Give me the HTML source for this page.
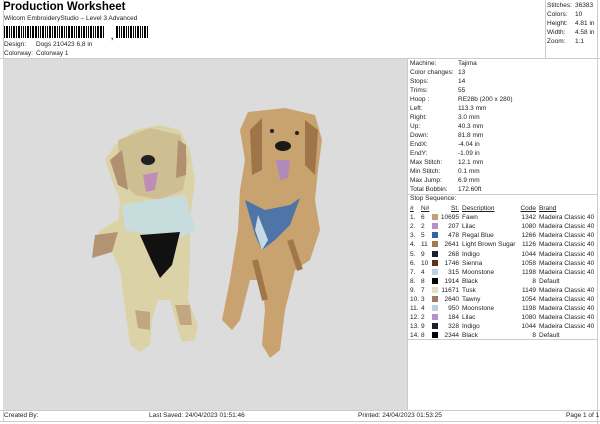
<!DOCTYPE html>
<html><head><meta charset="utf-8"><style>
*{margin:0;padding:0;box-sizing:border-box}
body{width:600px;height:424px;background:#fff;font-family:"Liberation Sans",sans-serif;font-size:6.5px;color:#222;position:relative;overflow:hidden}
.a{position:absolute;white-space:nowrap}
table{border-collapse:collapse}
td{padding:0;height:9px;line-height:9px;white-space:nowrap}
.seq{table-layout:fixed;width:188px}
.seq td{height:9.1px;line-height:9px;overflow:hidden}
.r{text-align:right}
.d{padding-left:3px}
.sw{display:inline-block;width:6px;height:6px;float:left;margin-top:1px}
u{text-decoration:underline}
</style></head><body>
<div class="a" style="left:3px;top:1px;font-size:11.5px;font-weight:bold;color:#000">Production Worksheet</div>
<div class="a" style="left:4px;top:15px">Wilcom EmbroideryStudio – Level 3 Advanced</div>
<div class="a" style="left:4px;top:26px;height:12px;width:142px;" id="bc"></div>
<div class="a" style="left:4px;top:41px">Design:</div><div class="a" style="left:36px;top:41px">Dogs 210423 6,8 in</div>
<div class="a" style="left:4px;top:50px">Colorway:</div><div class="a" style="left:36px;top:50px">Colorway 1</div>
<div class="a" style="left:0;top:58px;width:600px;border-top:1px solid #ccc"></div>
<div class="a" style="left:3px;top:0;height:58px;border-left:1px solid #ccc"></div>
<div class="a" style="left:597px;top:0;height:424px;border-left:1px solid #ccc"></div>
<div class="a" style="left:545px;top:0;width:53px;height:58px;border-left:1px solid #ccc"></div>
<table class="a" style="left:547px;top:1px"><tr><td style="width:28px">Stitches:</td><td>36383</td></tr><tr><td>Colors:</td><td>10</td></tr><tr><td>Height:</td><td>4.81 in</td></tr><tr><td>Width:</td><td>4.58 in</td></tr><tr><td>Zoom:</td><td>1:1</td></tr></table>
<div class="a" style="left:3px;top:59px;width:404px;height:351px;background:#dcdcdc"></div>
<svg class="a" style="left:3px;top:59px" width="404" height="351" viewBox="3 59 404 351">
<g>
<path d="M118 220 L100 230 L92 250 L110 248 L120 270 L128 330 L130 345 L140 352 L150 345 L152 320 L158 300 L170 300 L178 330 L182 342 L195 340 L198 325 L188 300 L190 260 L190 220 L195 180 L190 150 L180 130 L160 125 L135 130 L115 145 L105 160 L112 180 L120 200 Z" fill="#dcd2a8"/>
<path d="M118 140 L150 128 L180 135 L188 160 L183 190 L160 200 L135 195 L120 180 Z" fill="#cdbf92"/>
<path d="M110 160 L122 150 L128 190 L118 185 Z M178 140 L186 145 L186 175 L176 178 Z" fill="#b09070"/>
<path d="M122 205 L150 200 L185 195 L196 230 L175 240 L150 235 L125 230 Z" fill="#c7dcdc"/>
<path d="M140 235 L180 232 L172 265 L160 278 L152 262 Z" fill="#111"/>
<path d="M95 235 L118 232 L112 252 L92 258 Z" fill="#b39472"/>
<ellipse cx="148" cy="160" rx="7" ry="5" fill="#222"/>
<path d="M143 175 L158 172 L155 190 L146 192 Z" fill="#c08cb8"/>
<path d="M135 310 L150 312 L150 330 L138 328Z M175 305 L190 305 L192 325 L180 325Z" fill="#b39472" opacity=".7"/>
</g>
<g>
<path d="M248 112 L285 108 L315 115 L322 140 L318 170 L315 200 L320 230 L310 260 L295 270 L285 310 L280 350 L270 358 L262 345 L265 310 L262 280 L250 280 L240 320 L232 330 L222 320 L230 280 L238 230 L240 190 L245 160 L240 130 Z" fill="#c8a370"/>
<path d="M250 130 L262 118 L262 170 L252 175 Z M305 120 L318 130 L315 175 L305 165 Z" fill="#9e7448"/>
<path d="M245 200 L265 210 L290 205 L300 198 L290 225 L275 240 L262 250 L255 235 Z" fill="#4f74a8"/>
<path d="M258 215 L268 240 L262 250 L255 230Z" fill="#c4dbe6"/>
<ellipse cx="283" cy="146" rx="8" ry="5" fill="#1a1a1a"/>
<circle cx="272" cy="131" r="2" fill="#222"/><circle cx="297" cy="133" r="2" fill="#222"/>
<path d="M276 160 L290 160 L288 178 L280 180 Z" fill="#b08ab8"/>
<path d="M255 260 L265 300 M290 240 L300 270" stroke="#a07848" stroke-width="6" fill="none"/>
</g>
</svg>
<div class="a" style="left:407px;top:59px;height:351px;border-left:1px solid #ccc"></div>
<table class="a" style="left:410px;top:59px">
<tr><td style="width:48px">Machine:</td><td>Tajima</td></tr>
<tr><td>Color changes:</td><td>13</td></tr>
<tr><td>Stops:</td><td>14</td></tr>
<tr><td>Trims:</td><td>55</td></tr>
<tr><td>Hoop :</td><td>RE28b (200 x 280)</td></tr>
<tr><td>Left:</td><td>113.3 mm</td></tr>
<tr><td>Right:</td><td>3.0 mm</td></tr>
<tr><td>Up:</td><td>40.3 mm</td></tr>
<tr><td>Down:</td><td>81.8 mm</td></tr>
<tr><td>EndX:</td><td>-4.04 in</td></tr>
<tr><td>EndY:</td><td>-1.09 in</td></tr>
<tr><td>Max Stitch:</td><td>12.1 mm</td></tr>
<tr><td>Min Stitch:</td><td>0.1 mm</td></tr>
<tr><td>Max Jump:</td><td>6.9 mm</td></tr>
<tr><td>Total Bobbin:</td><td>172.60ft</td></tr>
</table>
<div class="a" style="left:407px;top:194px;width:191px;border-top:1px solid #ccc"></div>
<div class="a" style="left:410px;top:195px">Stop Sequence:</div>
<table class="a seq" style="left:410px;top:204px">
<colgroup><col style="width:11px"><col style="width:11px"><col style="width:27px"><col style="width:59px"><col style="width:18px"><col style="width:62px"></colgroup>
<tr><td><u>#</u></td><td><u>N#</u></td><td class="r"><u>St.</u></td><td class="d"><u>Description</u></td><td class="r"><u>Code</u></td><td class="d"><u>Brand</u></td></tr>
<tr><td>1.</td><td>6</td><td class="r"><span class="sw" style="background:#c89a80"></span>10695</td><td class="d">Fawn</td><td class="r">1342</td><td class="d">Madeira Classic 40</td></tr>
<tr><td>2.</td><td>2</td><td class="r"><span class="sw" style="background:#b890c8"></span>207</td><td class="d">Lilac</td><td class="r">1080</td><td class="d">Madeira Classic 40</td></tr>
<tr><td>3.</td><td>5</td><td class="r"><span class="sw" style="background:#3860a8"></span>478</td><td class="d">Regal Blue</td><td class="r">1266</td><td class="d">Madeira Classic 40</td></tr>
<tr><td>4.</td><td>11</td><td class="r"><span class="sw" style="background:#a87848"></span>2641</td><td class="d">Light Brown Sugar</td><td class="r">1126</td><td class="d">Madeira Classic 40</td></tr>
<tr><td>5.</td><td>9</td><td class="r"><span class="sw" style="background:#182030"></span>268</td><td class="d">Indigo</td><td class="r">1044</td><td class="d">Madeira Classic 40</td></tr>
<tr><td>6.</td><td>10</td><td class="r"><span class="sw" style="background:#603020"></span>1746</td><td class="d">Sienna</td><td class="r">1058</td><td class="d">Madeira Classic 40</td></tr>
<tr><td>7.</td><td>4</td><td class="r"><span class="sw" style="background:#b8d0e8"></span>315</td><td class="d">Moonstone</td><td class="r">1198</td><td class="d">Madeira Classic 40</td></tr>
<tr><td>8.</td><td>8</td><td class="r"><span class="sw" style="background:#000"></span>1914</td><td class="d">Black</td><td class="r">8</td><td class="d">Default</td></tr>
<tr><td>9.</td><td>7</td><td class="r"><span class="sw" style="background:#e8dcc0"></span>11671</td><td class="d">Tusk</td><td class="r">1149</td><td class="d">Madeira Classic 40</td></tr>
<tr><td>10.</td><td>3</td><td class="r"><span class="sw" style="background:#a07868"></span>2640</td><td class="d">Tawny</td><td class="r">1054</td><td class="d">Madeira Classic 40</td></tr>
<tr><td>11.</td><td>4</td><td class="r"><span class="sw" style="background:#b8d0e8"></span>950</td><td class="d">Moonstone</td><td class="r">1198</td><td class="d">Madeira Classic 40</td></tr>
<tr><td>12.</td><td>2</td><td class="r"><span class="sw" style="background:#b890c8"></span>184</td><td class="d">Lilac</td><td class="r">1080</td><td class="d">Madeira Classic 40</td></tr>
<tr><td>13.</td><td>9</td><td class="r"><span class="sw" style="background:#182030"></span>328</td><td class="d">Indigo</td><td class="r">1044</td><td class="d">Madeira Classic 40</td></tr>
<tr><td>14.</td><td>8</td><td class="r"><span class="sw" style="background:#000"></span>2344</td><td class="d">Black</td><td class="r">8</td><td class="d">Default</td></tr>
</table>
<div class="a" style="left:407px;top:339px;width:191px;border-top:1px solid #ccc"></div>
<div class="a" style="left:0;top:410px;width:600px;border-top:1px solid #ccc"></div>
<div class="a" style="left:0;top:421px;width:600px;border-top:1px solid #ccc"></div>
<div class="a" style="left:3px;top:411px;height:10px;border-left:1px solid #ccc"></div>
<div class="a" style="left:4px;top:412px">Created By:</div>
<div class="a" style="left:149px;top:412px">Last Saved: 24/04/2023 01:51:46</div>
<div class="a" style="left:358px;top:412px">Printed: 24/04/2023 01:53:25</div>
<div class="a" style="left:566px;top:412px">Page 1 of 1</div>
<script>
var s='',x=0,w=[1,2,1,1,2,1,2,1,1,1,2,1,2,2,1,1,2,1,1,2,1,2,1,1,2,1,1,2,2,1,1,2,1,2,1,1,2,1,1,2,2,1];
for(var i=0;i<w.length&&x<104;i++){s+='<div style="position:absolute;left:'+x+'px;top:0;width:'+w[i]+'px;height:12px;background:#000"></div>';x+=w[i]+1;}
s+='<div style="position:absolute;left:107px;top:6px;font-size:8px;font-weight:bold">,</div>';
x=112;for(var j=0;j<14;j++){s+='<div style="position:absolute;left:'+x+'px;top:0;width:'+(j%3?1:2)+'px;height:12px;background:#000"></div>';x+=(j%3?1:2)+1;}
document.getElementById('bc').innerHTML=s;
</script>
</body></html>
